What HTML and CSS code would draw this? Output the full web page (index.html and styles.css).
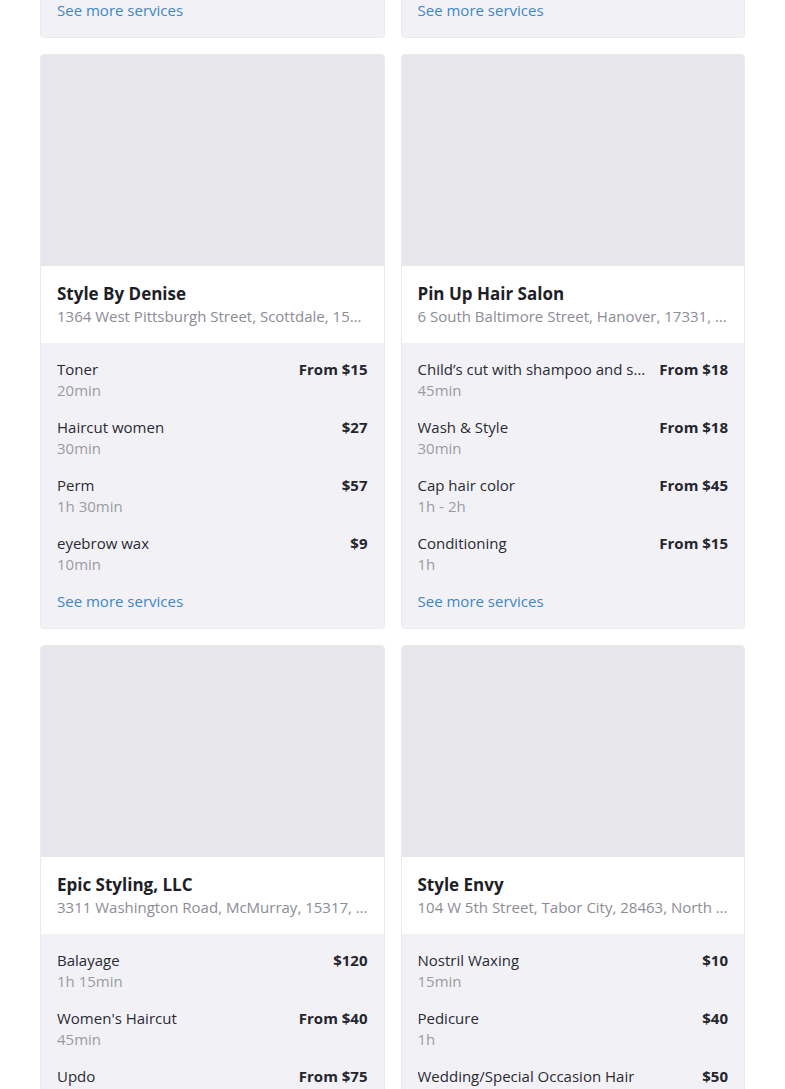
FILE: index.html
```html
<!DOCTYPE html>
<html lang="en">
<head>
<meta charset="utf-8">
<title>Salons</title>
<link rel="stylesheet" href="styles.css">
</head>
<body>
<main class="grid">
  <div class="card card-partial">
    <div class="services services-partial">
      <a class="more" href="#">See more services</a>
    </div>
  </div>
  <div class="card card-partial">
    <div class="services services-partial">
      <a class="more" href="#">See more services</a>
    </div>
  </div>

  <article class="card">
    <div class="photo"></div>
    <header class="head">
      <h2 class="name">Style By Denise</h2>
      <p class="addr">1364 West Pittsburgh Street, Scottdale, 15683, Pennsylvania</p>
    </header>
    <div class="services">
      <div class="svc"><div class="svc-info"><span class="svc-name">Toner</span><span class="svc-dur">20min</span></div><span class="price">From $15</span></div>
      <div class="svc"><div class="svc-info"><span class="svc-name">Haircut women</span><span class="svc-dur">30min</span></div><span class="price">$27</span></div>
      <div class="svc"><div class="svc-info"><span class="svc-name">Perm</span><span class="svc-dur">1h 30min</span></div><span class="price">$57</span></div>
      <div class="svc"><div class="svc-info"><span class="svc-name">eyebrow wax</span><span class="svc-dur">10min</span></div><span class="price">$9</span></div>
      <a class="more" href="#">See more services</a>
    </div>
  </article>

  <article class="card">
    <div class="photo"></div>
    <header class="head">
      <h2 class="name">Pin Up Hair Salon</h2>
      <p class="addr">6 South Baltimore Street, Hanover, 17331, Pennsylvania</p>
    </header>
    <div class="services">
      <div class="svc"><div class="svc-info"><span class="svc-name">Child’s cut with shampoo and style</span><span class="svc-dur">45min</span></div><span class="price">From $18</span></div>
      <div class="svc"><div class="svc-info"><span class="svc-name">Wash &amp; Style</span><span class="svc-dur">30min</span></div><span class="price">From $18</span></div>
      <div class="svc"><div class="svc-info"><span class="svc-name">Cap hair color</span><span class="svc-dur">1h - 2h</span></div><span class="price">From $45</span></div>
      <div class="svc"><div class="svc-info"><span class="svc-name">Conditioning</span><span class="svc-dur">1h</span></div><span class="price">From $15</span></div>
      <a class="more" href="#">See more services</a>
    </div>
  </article>

  <article class="card">
    <div class="photo"></div>
    <header class="head">
      <h2 class="name">Epic Styling, LLC</h2>
      <p class="addr">3311 Washington Road, McMurray, 15317, Pennsylvania</p>
    </header>
    <div class="services">
      <div class="svc"><div class="svc-info"><span class="svc-name">Balayage</span><span class="svc-dur">1h 15min</span></div><span class="price">$120</span></div>
      <div class="svc"><div class="svc-info"><span class="svc-name">Women's Haircut</span><span class="svc-dur">45min</span></div><span class="price">From $40</span></div>
      <div class="svc"><div class="svc-info"><span class="svc-name">Updo</span><span class="svc-dur">1h</span></div><span class="price">From $75</span></div>
      <a class="more" href="#">See more services</a>
    </div>
  </article>

  <article class="card">
    <div class="photo"></div>
    <header class="head">
      <h2 class="name">Style Envy</h2>
      <p class="addr">104 W 5th Street, Tabor City, 28463, North Carolina</p>
    </header>
    <div class="services">
      <div class="svc"><div class="svc-info"><span class="svc-name">Nostril Waxing</span><span class="svc-dur">15min</span></div><span class="price">$10</span></div>
      <div class="svc"><div class="svc-info"><span class="svc-name">Pedicure</span><span class="svc-dur">1h</span></div><span class="price">$40</span></div>
      <div class="svc"><div class="svc-info"><span class="svc-name">Wedding/Special Occasion Hair</span><span class="svc-dur">1h 30min</span></div><span class="price">$50</span></div>
      <a class="more" href="#">See more services</a>
    </div>
  </article>
</main>
</body>
</html>
```

FILE: styles.css
```css
* { box-sizing: border-box; }

html, body {
  margin: 0;
  padding: 0;
  background: #ffffff;
}

body {
  font-family: "Open Sans", "Liberation Sans", sans-serif;
  color: #25252e;
  font-size: 15px;
}

.grid {
  display: grid;
  grid-template-columns: 1fr 1fr;
  column-gap: 16px;
  row-gap: 16px;
  padding: 0 40px 40px 40px;
  width: 785px;
}

.card {
  border: 1px solid #e9e9ee;
  border-radius: 4px;
  overflow: hidden;
  background: #f2f2f6;
  display: flex;
  flex-direction: column;
}

.card-partial {
  border-top: none;
  border-top-left-radius: 0;
  border-top-right-radius: 0;
}

.photo {
  height: 211px;
  background: #e6e6eb;
}

.head {
  background: #ffffff;
  padding: 16px;
}

.name {
  margin: 0;
  font-size: 17px;
  line-height: 23px;
  font-weight: 700;
  color: #1e1e27;
}

.addr {
  margin: 0;
  font-size: 15px;
  line-height: 22px;
  color: #8c8c95;
  white-space: nowrap;
  overflow: hidden;
  text-overflow: ellipsis;
}

.services {
  background: #f2f2f6;
  padding: 16px;
  display: flex;
  flex-direction: column;
  gap: 16px;
}

.services-partial {
  padding-top: 0;
}

.svc {
  display: flex;
  justify-content: space-between;
  align-items: flex-start;
  gap: 10px;
}

.svc-info {
  display: flex;
  flex-direction: column;
  min-width: 0;
}

.svc-name {
  font-size: 15px;
  line-height: 21px;
  color: #2a2a33;
  white-space: nowrap;
  overflow: hidden;
  text-overflow: ellipsis;
}

.svc-dur {
  font-size: 15px;
  line-height: 21px;
  color: #9b9ba2;
}

.price {
  flex-shrink: 0;
  font-size: 15px;
  line-height: 21px;
  font-weight: 700;
  color: #25252e;
  white-space: nowrap;
}

.more {
  font-size: 15px;
  line-height: 21px;
  color: #3d86c6;
  text-decoration: none;
}
```
